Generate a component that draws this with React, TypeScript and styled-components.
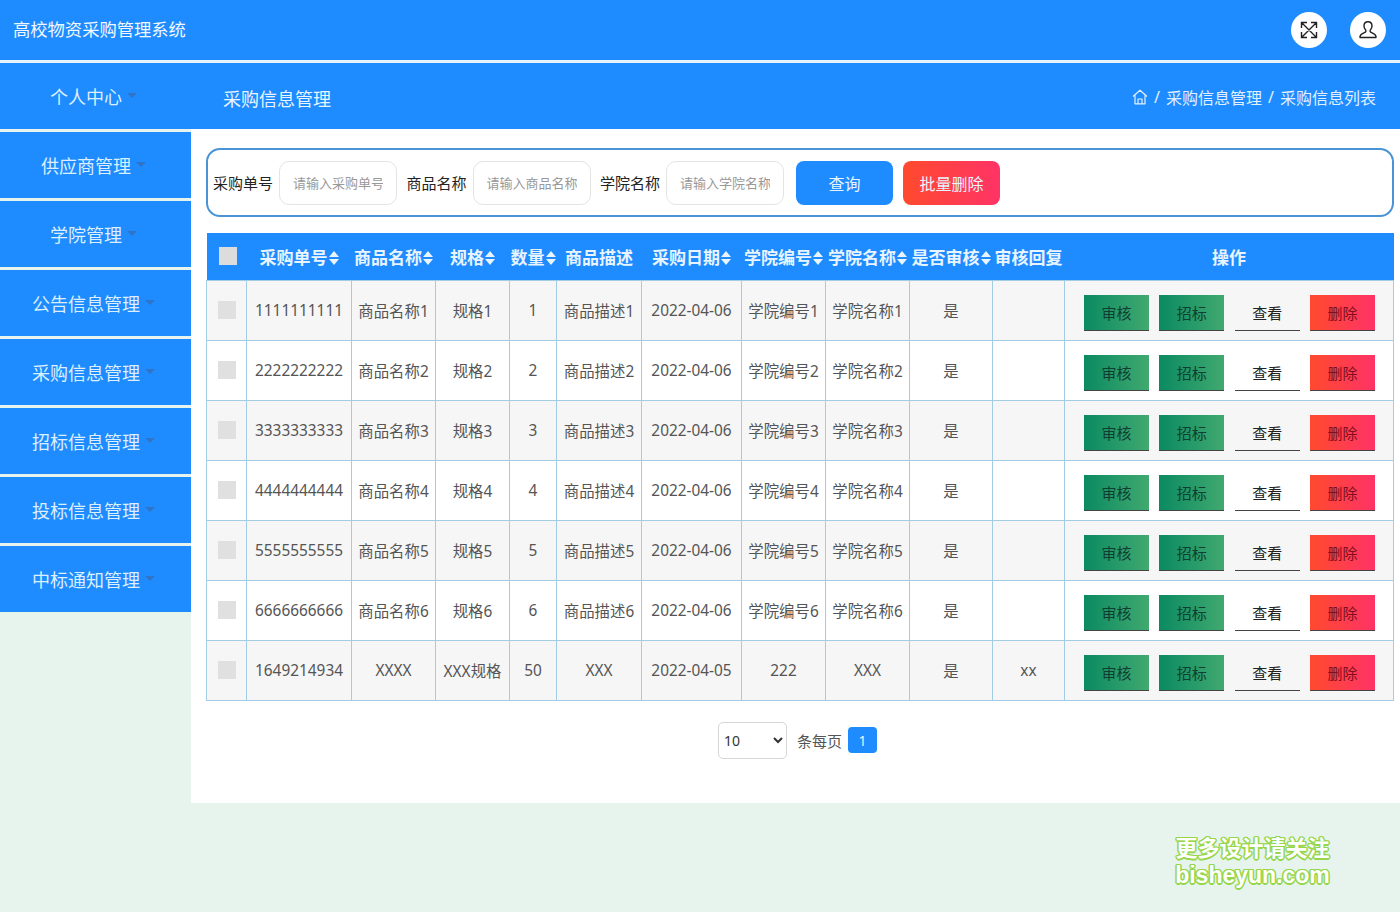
import React from "react";
import styled, { createGlobalStyle } from "styled-components";

const BLUE = "#1e8cff";
const FONT = `"Noto Sans", "Noto Sans CJK SC", sans-serif`;

const GlobalStyle = createGlobalStyle`
  html, body {
    margin: 0;
    padding: 0;
    background: #e7f4ee;
    font-family: ${FONT};
  }
  * { box-sizing: border-box; }
`;

const Page = styled.div`
  position: relative;
  width: 1400px;
  height: 912px;
  overflow: hidden;
  background: #e7f4ee;
`;

const TopBar = styled.header`
  height: 63px;
  padding: 0 13px;
  display: flex;
  align-items: center;
  justify-content: space-between;
  background: ${BLUE};
  border-bottom: 3px solid #e6f3fb;
`;

const Brand = styled.div`
  color: #f2f8ff;
  font-size: 17.3px;
  line-height: 1;
`;

const RoundButtons = styled.div`
  display: flex;
  gap: 23px;
  padding-right: 1px;
`;

const RoundButton = styled.div`
  width: 36px;
  height: 36px;
  border-radius: 50%;
  background: #fff;
  color: #222;
  display: flex;
  align-items: center;
  justify-content: center;
`;

const SubBar = styled.div`
  height: 66px;
  display: flex;
  align-items: center;
  background: ${BLUE};
  padding-right: 24px;
`;

const SubTitle = styled.div`
  margin-left: 32px;
  color: #e8f4ff;
  font-size: 18px;
  line-height: 1;
  margin-top: 6px;
`;

const Crumbs = styled.div`
  margin-left: auto;
  display: flex;
  align-items: center;
  gap: 6px;
  color: #e0f0ff;
  font-size: 16px;
  margin-top: 2px;
`;

const Body = styled.div`
  display: flex;
  align-items: flex-start;
`;

const Sidebar = styled.nav`
  width: 191px;
  flex: none;
  padding-top: 3px;
  display: flex;
  flex-direction: column;
  gap: 3px;
`;

const MenuItem = styled.div`
  width: 191px;
  flex: none;
  height: 66px;
  display: flex;
  align-items: center;
  justify-content: center;
  background: ${BLUE};
  color: #dcefff;
  font-size: 18px;
`;

const Caret = styled.svg`
  flex: none;
  margin: 0 4px 2px 5px;
  color: #2f74c6;
`;

const Content = styled.main`
  width: 1209px;
  height: 674px;
  background: #fff;
  padding: 19px 6px 0 15px;
`;

const SearchBox = styled.form`
  height: 69px;
  display: flex;
  align-items: center;
  padding-left: 5px;
  border: 2px solid #4a94d6;
  border-radius: 14px;
`;

const SearchField = styled.label`
  display: flex;
  align-items: center;
  gap: 6px;
  margin-right: 9.5px;
  color: #222;
  font-size: 15px;
  white-space: nowrap;
`;

const SearchInput = styled.input`
  width: 118px;
  height: 44px;
  padding: 0 13px;
  border: 1px solid #e4e4e4;
  border-radius: 10px;
  outline: none;
  font-family: ${FONT};
  font-size: 13px;

  &::placeholder {
    color: #999;
    opacity: 1;
  }
`;

const SearchActions = styled.div`
  display: flex;
  gap: 10px;
  margin-left: 2.5px;
`;

const ActionButton = styled.button<{ $danger?: boolean }>`
  width: 97px;
  height: 44px;
  border: 0;
  border-radius: 8px;
  color: #e8f4ff;
  font-family: ${FONT};
  font-size: 16px;
  background: ${(p) =>
    p.$danger ? "linear-gradient(90deg, #ff4a2e, #ff3366)" : BLUE};
`;

const Table = styled.table`
  width: 1187px;
  margin-top: 16px;
  table-layout: fixed;
  border-collapse: collapse;
`;

const HeadCell = styled.th`
  height: 47px;
  padding: 0;
  background: ${BLUE};
  color: #e8f4ff;
  font-size: 17px;
  font-weight: 700;
  white-space: nowrap;
  text-align: center;
`;

const SortSvg = styled.svg`
  margin-left: 1px;
  vertical-align: -1px;
`;

const Row = styled.tr<{ $striped: boolean }>`
  background: ${(p) => (p.$striped ? "#f6f6f6" : "#fff")};
`;

const Cell = styled.td`
  height: 60px;
  padding: 1px 0 0;
  border: 1px solid #a3cde4;
  color: #555;
  font-size: 15.4px;
  text-align: center;
  white-space: nowrap;
`;

const CheckMark = styled.span<{ $head?: boolean }>`
  display: inline-block;
  width: 18px;
  height: 18px;
  vertical-align: middle;
  background: ${(p) => (p.$head ? "#dcdcdc" : "#e0e0e0")};
  margin: ${(p) => (p.$head ? "0 0 3px 2px" : "0 0 3px 0")};
`;

const OpGroup = styled.div`
  display: flex;
  justify-content: center;
  gap: 10.3px;
  padding: 5px 0 0 1px;
`;

const OpButton = styled.button<{ $kind: "green" | "plain" | "red" }>`
  width: 65px;
  height: 36px;
  padding: 0;
  border: 0;
  border-bottom: 1px solid #444;
  color: ${(p) => (p.$kind === "plain" ? "#222" : p.$kind === "red" ? "#7d1020" : "#103e2f")};
  font-family: ${FONT};
  font-size: 15px;
  background: ${(p) =>
    p.$kind === "green"
      ? "linear-gradient(90deg, #0b8a62, #40a96f)"
      : p.$kind === "red"
        ? "linear-gradient(90deg, #ff4a2e, #ff3366)"
        : "transparent"};
`;

const Pager = styled.div`
  display: flex;
  align-items: center;
  margin: 21px 0 0 512px;
  color: #555;
  font-size: 15px;
`;

const PageSize = styled.select`
  width: 69px;
  height: 37px;
  padding-left: 1px;
  border: 1px solid #d6d6d6;
  border-radius: 5px;
  background: #fff;
  color: #333;
  font-family: ${FONT};
  font-size: 14px;
`;

const PageCount = styled.span`
  margin: 0 6px 0 10px;
`;

const PageNumber = styled.span`
  width: 29px;
  height: 26px;
  display: flex;
  align-items: center;
  justify-content: center;
  border-radius: 4px;
  background: ${BLUE};
  color: #e8f4ff;
  font-size: 14px;
`;

const Watermark = styled.div`
  position: absolute;
  left: 1174px;
  top: 836px;
  width: 157px;
  color: #fff;
  font-weight: 700;
  font-family: "Liberation Sans", "Noto Sans CJK SC", sans-serif;
  line-height: 26px;
  text-align: center;
  text-shadow:
    -1.5px 0 0 #96d64a,
    1.5px 0 0 #96d64a,
    0 -1.5px 0 #96d64a,
    0 1.5px 0 #96d64a,
    -1px -1px 0 #96d64a,
    1px -1px 0 #96d64a,
    -1px 1px 0 #96d64a,
    1px 1px 0 #96d64a;
`;

const WatermarkLine = styled.div<{ $size: number }>`
  font-size: ${(p) => p.$size}px;
  white-space: nowrap;
`;

const COLUMNS = [40, 105, 84, 74, 47, 85, 100, 84, 84, 83, 72, 329];

const HEADS = [
  { label: "采购单号", sort: true },
  { label: "商品名称", sort: true },
  { label: "规格", sort: true },
  { label: "数量", sort: true },
  { label: "商品描述", sort: false },
  { label: "采购日期", sort: true },
  { label: "学院编号", sort: true },
  { label: "学院名称", sort: true },
  { label: "是否审核", sort: true },
  { label: "审核回复", sort: false },
];

const numbered = (n: number, no: string) => [
  no,
  `商品名称${n}`,
  `规格${n}`,
  `${n}`,
  `商品描述${n}`,
  "2022-04-06",
  `学院编号${n}`,
  `学院名称${n}`,
  "是",
  "",
];

const ROWS = [
  numbered(1, "1111111111"),
  numbered(2, "2222222222"),
  numbered(3, "3333333333"),
  numbered(4, "4444444444"),
  numbered(5, "5555555555"),
  numbered(6, "6666666666"),
  ["1649214934", "XXXX", "XXX规格", "50", "XXX", "2022-04-05", "222", "XXX", "是", "xx"],
];

const MENU = ["供应商管理", "学院管理", "公告信息管理", "采购信息管理", "招标信息管理", "投标信息管理", "中标通知管理"];

const MenuCaret = () => (
  <Caret width="10" height="5" viewBox="0 0 10 5">
    <path d="M0 0h10L5 5z" fill="currentColor" />
  </Caret>
);

const SortMark = () => (
  <SortSvg width="10" height="14" viewBox="0 0 10 14">
    <path d="M5 0l5 6H0zM0 8h10l-5 6z" fill="#e8f4ff" />
  </SortSvg>
);

const ExpandIcon = () => (
  <svg width="20" height="20" viewBox="0 0 20 20" fill="none" stroke="currentColor" strokeWidth="1.4">
    <path d="M3 3l14 14M17 3L3 17M2.500 8V2.500H8M12 2.500h5.500V8M17.500 12v5.500H12M8 17.500H2.500V12" />
  </svg>
);

const UserIcon = () => (
  <svg width="20" height="20" viewBox="0 0 20 20" fill="none" stroke="currentColor" strokeWidth="1.4" strokeLinejoin="round">
    <path d="M10 1.800c-2.500 0-4 1.800-4 4.200 0 1.700.7 3 1.600 3.900.4.500.4 1.500-.1 2-1 1-5.500 1.800-5.500 4.800v.8h16v-.8c0-3-4.500-3.800-5.500-4.800-.5-.5-.5-1.500-.1-2C13.300 9 14 7.700 14 6c0-2.400-1.500-4.200-4-4.200z" />
  </svg>
);

const HomeIcon = () => (
  <svg width="16" height="16" viewBox="0 0 16 16" fill="none" stroke="currentColor" strokeWidth="1.2" strokeLinejoin="round">
    <path d="M1 7.500 8 1.200l7 6.300M3 6.200V14.800h10V6.200M6 14.800V10h4v4.800" />
  </svg>
);

export default function App() {
  return (
    <Page>
      <GlobalStyle />
      <TopBar>
        <Brand>高校物资采购管理系统</Brand>
        <RoundButtons>
          <RoundButton>
            <ExpandIcon />
          </RoundButton>
          <RoundButton>
            <UserIcon />
          </RoundButton>
        </RoundButtons>
      </TopBar>
      <SubBar>
        <MenuItem>
          个人中心
          <MenuCaret />
        </MenuItem>
        <SubTitle>采购信息管理</SubTitle>
        <Crumbs>
          <HomeIcon />
          <span>/</span>
          <span>采购信息管理</span>
          <span>/</span>
          <span>采购信息列表</span>
        </Crumbs>
      </SubBar>
      <Body>
        <Sidebar>
          {MENU.map((name) => (
            <MenuItem key={name}>
              {name}
              <MenuCaret />
            </MenuItem>
          ))}
        </Sidebar>
        <Content>
          <SearchBox>
            <SearchField>
              采购单号
              <SearchInput placeholder="请输入采购单号" />
            </SearchField>
            <SearchField>
              商品名称
              <SearchInput placeholder="请输入商品名称" />
            </SearchField>
            <SearchField>
              学院名称
              <SearchInput placeholder="请输入学院名称" />
            </SearchField>
            <SearchActions>
              <ActionButton type="button">查询</ActionButton>
              <ActionButton type="button" $danger>
                批量删除
              </ActionButton>
            </SearchActions>
          </SearchBox>
          <Table>
            <colgroup>
              {COLUMNS.map((w, i) => (
                <col key={i} style={{ width: w }} />
              ))}
            </colgroup>
            <thead>
              <tr>
                <HeadCell>
                  <CheckMark $head />
                </HeadCell>
                {HEADS.map((h) => (
                  <HeadCell key={h.label}>
                    {h.label}
                    {h.sort && <SortMark />}
                  </HeadCell>
                ))}
                <HeadCell>操作</HeadCell>
              </tr>
            </thead>
            <tbody>
              {ROWS.map((row, r) => (
                <Row key={r} $striped={r % 2 === 0}>
                  <Cell>
                    <CheckMark />
                  </Cell>
                  {row.map((value, c) => (
                    <Cell key={c}>{value}</Cell>
                  ))}
                  <Cell>
                    <OpGroup>
                      <OpButton $kind="green">审核</OpButton>
                      <OpButton $kind="green">招标</OpButton>
                      <OpButton $kind="plain">查看</OpButton>
                      <OpButton $kind="red">删除</OpButton>
                    </OpGroup>
                  </Cell>
                </Row>
              ))}
            </tbody>
          </Table>
          <Pager>
            <PageSize defaultValue="10">
              <option>10</option>
              <option>20</option>
              <option>50</option>
            </PageSize>
            <PageCount>条每页</PageCount>
            <PageNumber>1</PageNumber>
          </Pager>
        </Content>
      </Body>
      <Watermark>
        <WatermarkLine $size={22}>更多设计请关注</WatermarkLine>
        <WatermarkLine $size={23}>bisheyun.com</WatermarkLine>
      </Watermark>
    </Page>
  );
}
